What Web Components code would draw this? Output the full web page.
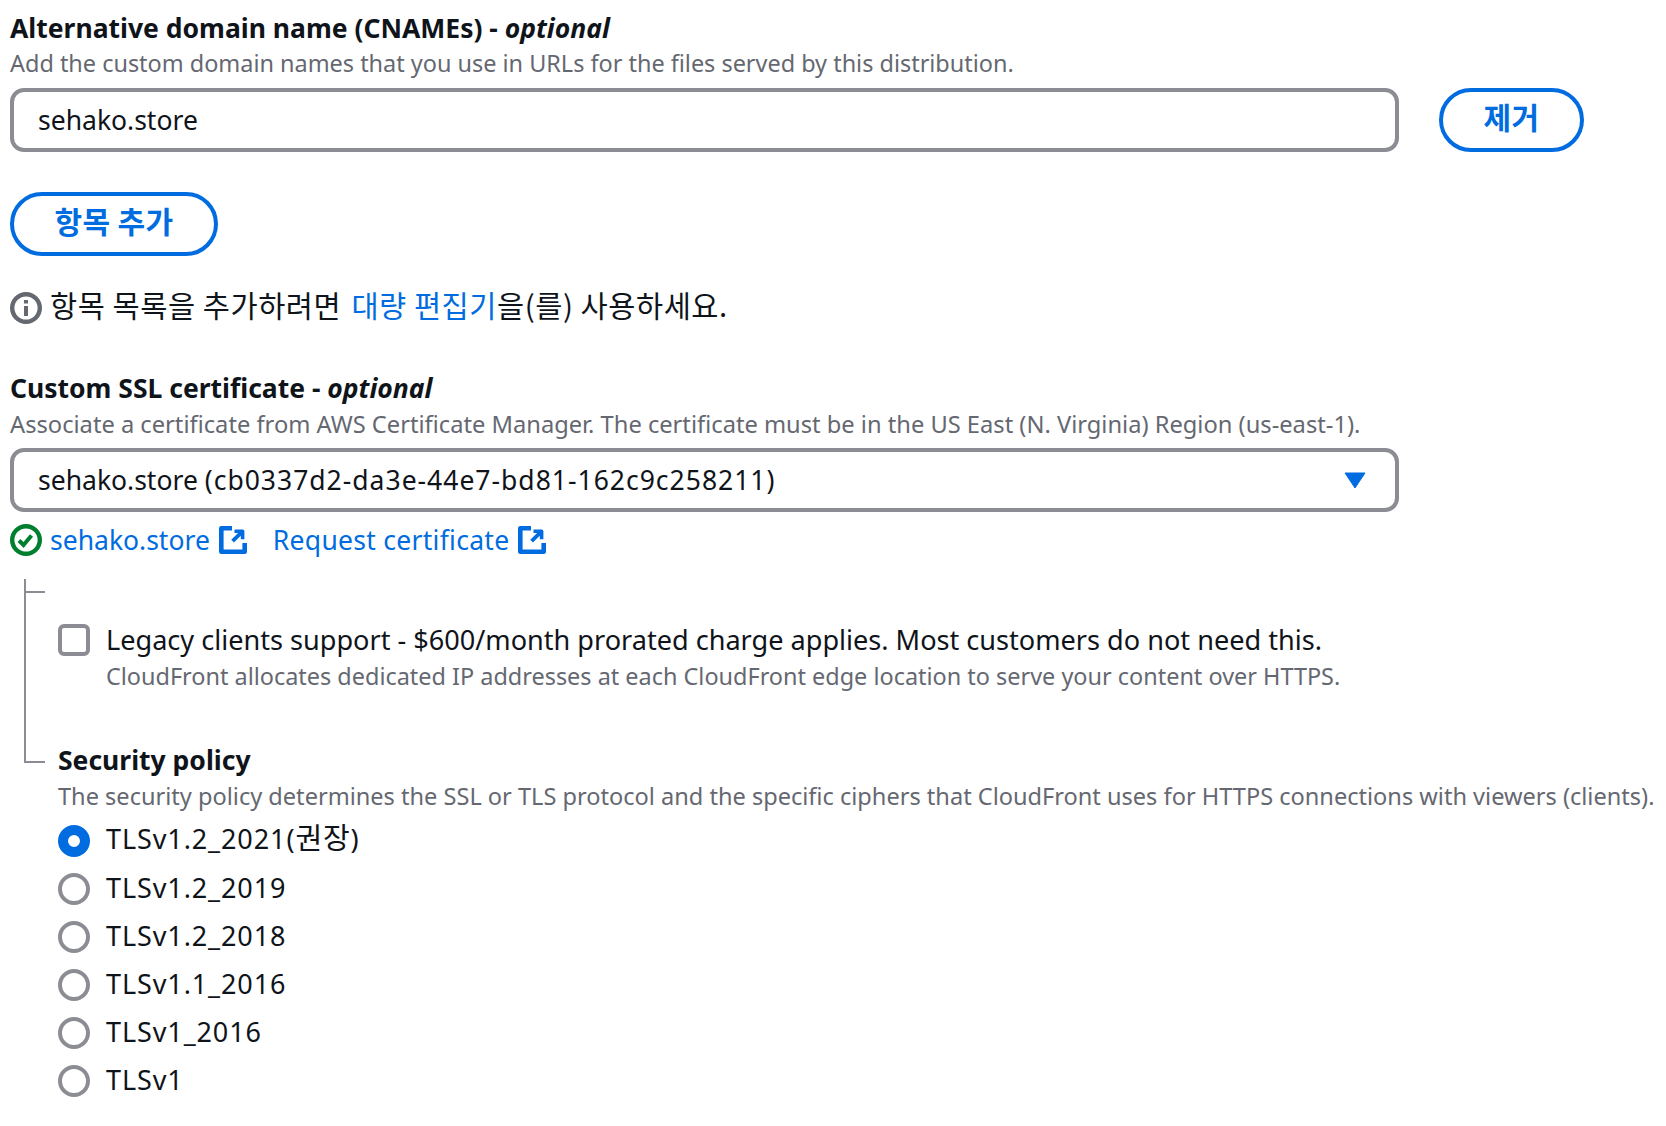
<!DOCTYPE html>
<html lang="en">
<head>
<meta charset="utf-8">
<title>CloudFront settings</title>
<style>
  html, body { margin: 0; background: #fff; }
  body {
    font-family: "Noto Sans", "Noto Sans CJK KR", sans-serif;
    color: #0f141a;
    width: 1666px;
    height: 1126px;
    overflow: hidden;
  }
  .page { display: block; padding: 10px 0 0 10px; }
</style>
</head>
<body>
<template id="form-field-tpl">
  <style>
    :host { display: block; }
    .label { font-size: 26.5px; line-height: 36px; font-weight: 700; height: 36px; white-space: nowrap; }
    .desc { font-size: var(--desc-size, 23.5px); line-height: 34px; height: 34px; color: #656871; white-space: nowrap; margin-top: var(--desc-gap, 0); }
    ::slotted(i) { font-weight: 600; }
  </style>
  <div class="label"><slot name="label"></slot></div>
  <div class="desc"><slot name="desc"></slot></div>
  <slot></slot>
</template>

<template id="text-box-tpl">
  <style>
    :host { display: block; width: 1389px; }
    .box {
      box-sizing: border-box; height: 64px; border: 4px solid #8c8c94; border-radius: 14px;
      display: flex; align-items: center; justify-content: space-between;
      padding: 0 29px 0 24px; font-size: 26.5px; white-space: nowrap;
    }
  </style>
  <div class="box"><slot></slot></div>
</template>

<template id="pill-button-tpl">
  <style>
    :host { display: inline-block; }
    .btn {
      box-sizing: border-box; height: 64px; border: 4px solid #006ce0; border-radius: 32px;
      display: flex; align-items: center; justify-content: center; padding-bottom: 8px;
      width: var(--btn-width, 145px); color: #006ce0; font-size: 30px; font-weight: 700; letter-spacing: .4px;
      font-family: "Noto Sans CJK KR", sans-serif;
    }
  </style>
  <div class="btn"><slot></slot></div>
</template>

<template id="ext-link-tpl">
  <style>
    :host { display: inline-flex; align-items: center; gap: 9px; color: #006ce0; font-size: 26.5px; white-space: nowrap; }
    svg { width: 28px; height: 28px; display: block; }
  </style>
  <slot></slot>
  <svg viewBox="0 0 28 28" fill="none" stroke="#006ce0" stroke-width="4.6" stroke-linejoin="round">
    <path d="M13 2.3H2.3v23.4h23.4V17"/>
    <path d="M15.5 5.2H23.6V13.2" stroke-width="3.6"/>
    <path d="M23 5.8L13.6 15.2" stroke-width="3.8"/>
  </svg>
</template>

<template id="check-box-tpl">
  <style>
    :host { display: flex; gap: 16px; }
    .box { box-sizing: border-box; width: 32px; height: 32px; border: 4px solid #8c8c94; border-radius: 6px; flex: none; }
    .main { font-size: 27.1px; line-height: 32px; white-space: nowrap; }
    .sub { font-size: 23.45px; line-height: 34px; color: #656871; white-space: nowrap; margin-top: 3px; }
  </style>
  <div class="box"></div>
  <div>
    <div class="main"><slot></slot></div>
    <div class="sub"><slot name="desc"></slot></div>
  </div>
</template>

<template id="radio-item-tpl">
  <style>
    :host { display: flex; align-items: center; gap: 16px; height: 48px; font-size: 27px; letter-spacing: .9px; white-space: nowrap; }
    .dot { box-sizing: border-box; width: 32px; height: 32px; border-radius: 50%; border: 4px solid #8c8c94; flex: none; margin-top: 4px; }
    :host([checked]) .dot { border: 10px solid #006ce0; }
  </style>
  <div class="dot"></div>
  <slot></slot>
</template>

<template id="tree-group-tpl">
  <style>
    :host { display: flex; }
    .lines { width: 34px; margin-left: 14px; flex: none; }
    .elbow { border-left: 2px solid #8c8c94; border-bottom: 2px solid #8c8c94; width: 19px; }
    .a { height: 12px; }
    .b { height: 168px; }
    .body { min-width: 0; }
  </style>
  <div class="lines"><div class="elbow a"></div><div class="elbow b"></div></div>
  <div class="body"><slot></slot></div>
</template>

<form-page class="page">
  <form-field style="--desc-size:23.45px">
    <span slot="label">Alternative domain name (CNAMEs) - <i>optional</i></span>
    <span slot="desc">Add the custom domain names that you use in URLs for the files served by this distribution.</span>
    <field-row style="margin-top:8px">
      <text-box>sehako.store</text-box>
      <pill-button style="margin-left:40px">제거</pill-button>
    </field-row>
  </form-field>
  <pill-button style="margin-top:40px;--btn-width:208px">항목 추가</pill-button>
  <info-note style="margin-top:30px">항목 목록을 추가하려면 <a>대량 편집기</a>을(를) 사용하세요.</info-note>

  <form-field style="margin-top:48px;--desc-size:23.68px;--desc-gap:1px">
    <span slot="label">Custom SSL certificate - <i>optional</i></span>
    <span slot="desc">Associate a certificate from AWS Certificate Manager. The certificate must be in the US East (N. Virginia) Region (us-east-1).</span>
    <text-box style="margin-top:7px"><span>sehako.store <span style="letter-spacing:1px">(cb0337d2-da3e-44e7-bd81-162c9c258211)</span></span>
      <svg width="22" height="17" viewBox="0 0 22 17"><path d="M1 1h20L11 16z" fill="#006ce0" stroke="#006ce0" stroke-linejoin="round"/></svg>
    </text-box>
  </form-field>
  <status-row style="margin-top:8px">
    <ext-link>sehako.store</ext-link>
    <ext-link style="margin-left:18px;letter-spacing:.28px">Request certificate</ext-link>
  </status-row>

  <tree-group style="margin-top:19px">
    <check-box style="margin-top:45px">Legacy clients support - $600/month prorated charge applies. Most customers do not need this.
      <span slot="desc">CloudFront allocates dedicated IP addresses at each CloudFront edge location to serve your content over HTTPS.</span>
    </check-box>
    <form-field style="margin-top:49px;--desc-size:23.57px;--desc-gap:1px">
      <span slot="label">Security policy</span>
      <span slot="desc">The security policy determines the SSL or TLS protocol and the specific ciphers that CloudFront uses for HTTPS connections with viewers (clients).</span>
    </form-field>
    <radio-group style="margin-top:2px">
      <radio-item checked><span style="line-height:32px">TLSv1.2_2021(<span style="font-size:29px;line-height:1">권장</span>)</span></radio-item>
      <radio-item>TLSv1.2_2019</radio-item>
      <radio-item>TLSv1.2_2018</radio-item>
      <radio-item>TLSv1.1_2016</radio-item>
      <radio-item>TLSv1_2016</radio-item>
      <radio-item>TLSv1</radio-item>
    </radio-group>
  </tree-group>
</form-page>

<script>
  // elemen yang cuma menyalin template ke shadow root
  function fromTemplate(tag, id) {
    customElements.define(tag, class extends HTMLElement {
      constructor() {
        super();
        this.attachShadow({mode: 'open'}).appendChild(document.getElementById(id).content.cloneNode(true));
      }
    });
  }

  function fromMarkup(tag, html) {
    customElements.define(tag, class extends HTMLElement {
      constructor() {
        super();
        this.attachShadow({mode: 'open'}).innerHTML = html;
      }
    });
  }

  fromTemplate('form-field', 'form-field-tpl');
  fromTemplate('text-box', 'text-box-tpl');
  fromTemplate('pill-button', 'pill-button-tpl');
  fromTemplate('ext-link', 'ext-link-tpl');
  fromTemplate('check-box', 'check-box-tpl');
  fromTemplate('radio-item', 'radio-item-tpl');
  fromTemplate('tree-group', 'tree-group-tpl');

  fromMarkup('form-page', `<style>:host{display:block}</style><slot></slot>`);
  fromMarkup('field-row', `<style>:host{display:flex}</style><slot></slot>`);
  fromMarkup('radio-group', `<style>:host{display:block}</style><slot></slot>`);

  fromMarkup('info-note', `
    <style>
      :host { display: flex; align-items: center; gap: 8px; height: 36px; font-size: 29.5px; letter-spacing: .55px; white-space: nowrap; font-family: "Noto Sans CJK KR", sans-serif; }
      svg { width: 32px; height: 32px; flex: none; margin-top: 8px; }
      ::slotted(a) { color: #006ce0; margin-left: 3px; }
    </style>
    <svg viewBox="0 0 32 32" fill="none" stroke="#656871" stroke-width="4.4">
      <circle cx="16" cy="16" r="13.8"/>
      <path d="M16 14v10M16 8v3.6" stroke-width="4"/>
    </svg>
    <span><slot></slot></span>`);

  fromMarkup('status-row', `
    <style>
      :host { display: flex; align-items: center; gap: 8px; height: 40px; }
      svg { width: 32px; height: 32px; flex: none; }
    </style>
    <svg viewBox="0 0 32 32" fill="none" stroke="#00802f" stroke-width="4.4">
      <circle cx="16" cy="16" r="13.8"/>
      <path d="M9 16.5l4.5 4.5 8-9.5" stroke-width="4"/>
    </svg>
    <slot></slot>`);
</script>
</body>
</html>
